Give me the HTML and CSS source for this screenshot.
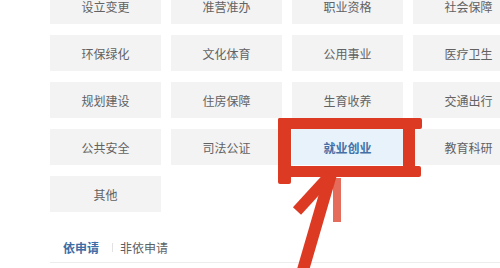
FILE: index.html
```html
<!DOCTYPE html>
<html lang="zh">
<head>
<meta charset="utf-8">
<link rel="stylesheet" href="styles.css">
</head>
<body>
<div class="page">
  <div class="grid">
    <div class="cell">设立变更</div>
    <div class="cell">准营准办</div>
    <div class="cell">职业资格</div>
    <div class="cell">社会保障</div>
    <div class="cell">环保绿化</div>
    <div class="cell">文化体育</div>
    <div class="cell">公用事业</div>
    <div class="cell">医疗卫生</div>
    <div class="cell">规划建设</div>
    <div class="cell">住房保障</div>
    <div class="cell">生育收养</div>
    <div class="cell">交通出行</div>
    <div class="cell">公共安全</div>
    <div class="cell">司法公证</div>
    <div class="cell active">就业创业</div>
    <div class="cell">教育科研</div>
    <div class="cell">其他</div>
  </div>
  <div class="tabs">
    <span class="tab on">依申请</span>
    <span class="sep"></span>
    <span class="tab">非依申请</span>
  </div>
</div>
<svg class="mark" width="500" height="268" viewBox="0 0 500 268">
  <g fill="#dc3a23">
    <rect x="278" y="118" width="144" height="11" rx="2"/>
    <rect x="278" y="118" width="13" height="66" rx="2"/>
    <rect x="403" y="120" width="12" height="54" rx="2"/>
    <rect x="284" y="166" width="137" height="11" rx="2"/>
  </g>
  <g stroke="#dc3a23" stroke-linecap="butt" fill="none">
    <line x1="331" y1="174" x2="303" y2="270" stroke-width="12"/>
    <line x1="330" y1="175" x2="297" y2="211" stroke-width="11"/>
    <line x1="337" y1="178" x2="337" y2="222" stroke-width="8" stroke-opacity="0.75"/>
  </g>
</svg>
</body>
</html>
```

FILE: styles.css
```css
html, body {
  margin: 0;
  padding: 0;
  background: #ffffff;
  overflow: hidden;
}
body {
  width: 500px;
  height: 268px;
  position: relative;
  font-family: "Noto Sans CJK SC", "Noto Sans", sans-serif;
}
.page {
  padding-left: 50px;
}
.grid {
  margin-top: -12px;
  display: grid;
  grid-template-columns: repeat(4, 111px);
  grid-auto-rows: 36px;
  column-gap: 10px;
  row-gap: 11px;
}
.cell {
  background: #f3f3f3;
  color: #626262;
  font-size: 12px;
  display: flex;
  align-items: center;
  justify-content: center;
}
.cell.active {
  background: #e7f2fb;
  color: #4470a6;
  font-weight: bold;
}
.tabs {
  margin-top: 20px;
  height: 30px;
  border-bottom: 1px solid #ededed;
  display: flex;
  align-items: center;
  padding-left: 13px;
  font-size: 12px;
}
.tab {
  color: #5f5f5f;
}
.tab.on {
  color: #3c6da6;
  font-weight: bold;
}
.sep {
  width: 1px;
  height: 9px;
  background: #e2e2e2;
  margin: 0 7px 0 13px;
}
.mark {
  position: absolute;
  left: 0;
  top: 0;
}
```
